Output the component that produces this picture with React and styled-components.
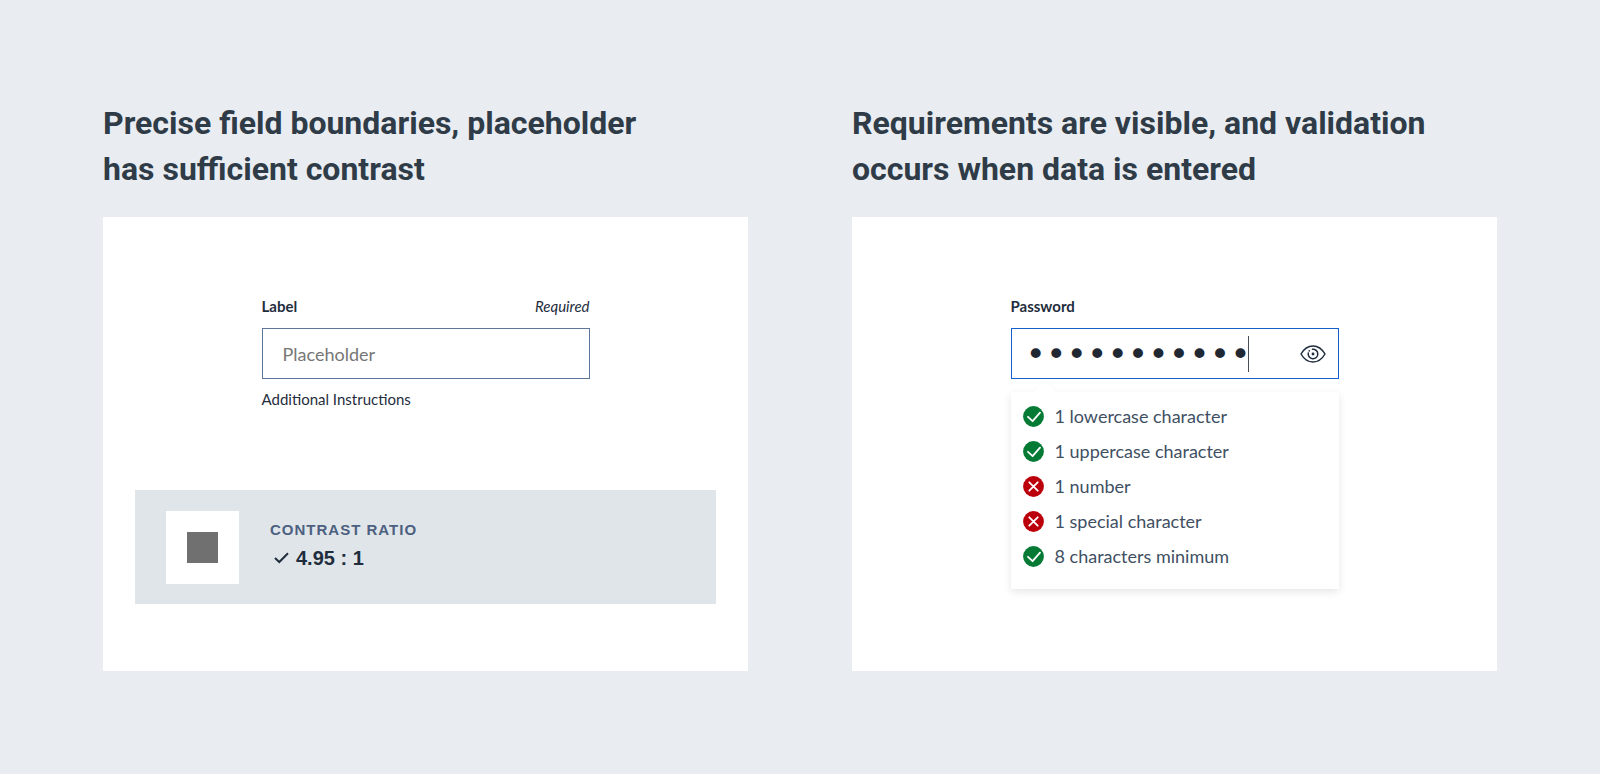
import React, { useState } from "react";
import styled, { createGlobalStyle } from 'styled-components';

let GlobalStyle = createGlobalStyle`
    * {
        box-sizing: border-box;
    }
    body {
        margin: 0;
        background: #e9edf2;
        color: #1f2d3d;
        font-family: Lato, "Liberation Sans", sans-serif;
    }
`
let Page = styled.main`
    display: grid;
    grid-template-columns: 1fr 1fr;
    gap: 104px;
    min-height: 100vh;
    padding: 100px 103px 103px;
`
let Column = styled.section`
    display: flex;
    flex-direction: column;
`
let Title = styled.h2`
    margin: 0 0 25px;
    max-width: 584px;
    color: #2f3c48;
    font: bold 32px/46px Roboto, sans-serif;
`
let Card = styled.div`
    display: flex;
    flex-direction: column;
    flex: 1;
    align-items: center;
    justify-content: space-between;
    padding: 79px 32px 67px;
    background: #fff;
`
let Field = styled.div`
    width: 328px;
    max-width: 100%;
    font-size: 15px;
    line-height: 20px;
`
let FieldTop = styled.div`
    display: flex;
    justify-content: space-between;
    margin-bottom: 12px;
`
let Label = styled.label`
    font-weight: bold;
`
let InputBox = styled.div`
    position: relative;
    display: flex;
    align-items: center;
    height: 51px;
    padding: 0 12px 0 20px;
    border: 1px solid ${props => props.$border};
    background: #fff;
`
let Input = styled.input`
    flex: 1;
    min-width: 0;
    height: 100%;
    padding: 0;
    border: 0;
    outline: 0;
    background: none;
    color: #1f2733;
    font: 18px Lato, sans-serif;
    &::placeholder {
        color: #767676;
        opacity: 1;
    }
`
let PasswordInput = styled(Input)`
    margin-left: -6px;
    font: 34px "DejaVu Sans Mono", monospace;
    caret-color: transparent;
`
let Caret = styled.span`
    position: absolute;
    top: 7px;
    width: 1px;
    height: 36px;
    background: #4a4f57;
`
let EyeButton = styled.button`
    display: flex;
    padding: 0;
    border: 0;
    background: none;
    color: #1f2d3d;
    cursor: pointer;
`
let Help = styled.div`
    margin-top: 10px;
`
let Ratio = styled.div`
    display: flex;
    align-items: center;
    gap: 31px;
    align-self: stretch;
    height: 114px;
    padding: 0 31px;
    background: #e0e5e9;
    font-family: "Liberation Sans", sans-serif;
    font-weight: bold;
`
let Swatch = styled.div`
    display: grid;
    place-items: center;
    width: 73px;
    height: 73px;
    background: #fff;
    &::after {
        content: '';
        width: 31px;
        height: 31px;
        background: #707070;
    }
`
let RatioText = styled.div`
    padding-bottom: 6px;
`
let RatioName = styled.div`
    color: #4c6080;
    font-size: 15px;
    line-height: 28px;
    letter-spacing: 1px;
`
let RatioValue = styled.div`
    display: flex;
    align-items: center;
    gap: 7px;
    padding-left: 4px;
    font-size: 20px;
    line-height: 28px;
`
let Rules = styled.ul`
    position: relative;
    margin: 13px 0 0;
    padding: 7px 12px 15px;
    list-style: none;
    background: #fff;
    box-shadow: 0 3px 8px rgba(0, 0, 0, 0.1);
    &::before {
        content: '';
        position: absolute;
        top: -8px;
        left: 26px;
        width: 16px;
        height: 16px;
        background: #fff;
        box-shadow: -1px -1px 2px rgba(0, 0, 0, 0.02);
        transform: rotate(45deg);
    }
`
let Rule = styled.li`
    display: flex;
    align-items: center;
    gap: 11px;
    color: #3f5063;
    font-size: 18px;
    line-height: 35px;
`

let rules = [
    { text: '1 lowercase character', ok: true },
    { text: '1 uppercase character', ok: true },
    { text: '1 number', ok: false },
    { text: '1 special character', ok: false },
    { text: '8 characters minimum', ok: true },
]

// width of one bullet in the password box
let DOT = 21

function StatusIcon({ ok }){
    return (
        <svg width="21" height="21" viewBox="0 0 21 21" fill="none" stroke="#fff" strokeWidth="1.8" strokeLinecap="round">
            <circle cx="10.5" cy="10.5" r="10.4" fill={ok ? '#047a34' : '#bb000b'} stroke="none" />
            {
                ok
                ? <path d="M5 10.8L9.6 15.2L17 6.6" strokeLinejoin="round" />
                : <path d="M6.3 6.3L14.7 14.7M14.7 6.3L6.3 14.7" />
            }
        </svg>
    )
}

function EyeIcon(){
    return (
        <svg width="26" height="18" viewBox="0 0 26 18" fill="none" stroke="currentColor" strokeWidth="1.5" strokeLinecap="round" strokeLinejoin="round">
            <path d="M1 9C4 3.8 8 1 13 1S22 3.8 25 9C22 14.2 18 17 13 17S4 14.2 1 9Z" />
            <path d="M12.4 4.2A4.8 4.8 0 1 1 8.3 8" />
            <path d="M9.2 5.9L9.4 5.7" />
            <circle cx="13" cy="9" r="1.4" fill="currentColor" stroke="none" />
        </svg>
    )
}

function App(){
    let [text, setText] = useState('')
    let [password, setPassword] = useState('Passwordabc')
    let [show, setShow] = useState(false)

    return (
        <>
            <GlobalStyle />
            <Page>
                <Column>
                    <Title>Precise field boundaries, placeholder has sufficient contrast</Title>
                    <Card>
                        <Field>
                            <FieldTop>
                                <Label htmlFor="text">Label</Label>
                                <em>Required</em>
                            </FieldTop>
                            <InputBox $border="#5d7799">
                                <Input id="text" placeholder="Placeholder" aria-describedby="help" value={text} onChange={(e)=>{ setText(e.target.value) }} />
                            </InputBox>
                            <Help id="help">Additional Instructions</Help>
                        </Field>
                        <Ratio>
                            <Swatch />
                            <RatioText>
                                <RatioName>CONTRAST RATIO</RatioName>
                                <RatioValue>
                                    <svg width="15" height="12" viewBox="0 0 15 12" fill="none" stroke="currentColor" strokeWidth="2">
                                        <path d="M1 6L5.3 10L14 1.3" />
                                    </svg>
                                    4.95 : 1
                                </RatioValue>
                            </RatioText>
                        </Ratio>
                    </Card>
                </Column>
                <Column>
                    <Title>Requirements are visible, and validation occurs when data is entered</Title>
                    <Card>
                        <Field>
                            <FieldTop>
                                <Label htmlFor="password">Password</Label>
                            </FieldTop>
                            <InputBox $border="#1560cc">
                                <PasswordInput id="password" type={show ? 'text' : 'password'} value={password} onChange={(e)=>{ setPassword(e.target.value) }} />
                                {show ? null : <Caret style={{ left: 5 + password.length * DOT }} />}
                                <EyeButton type="button" aria-label="Show password" onClick={()=>{ setShow(!show) }}>
                                    <EyeIcon />
                                </EyeButton>
                            </InputBox>
                            <Rules>
                                {
                                    rules.map((x)=>(
                                        <Rule key={x.text}><StatusIcon ok={x.ok} />{x.text}</Rule>
                                    ))
                                }
                            </Rules>
                        </Field>
                    </Card>
                </Column>
            </Page>
        </>
    )
}

export default App
